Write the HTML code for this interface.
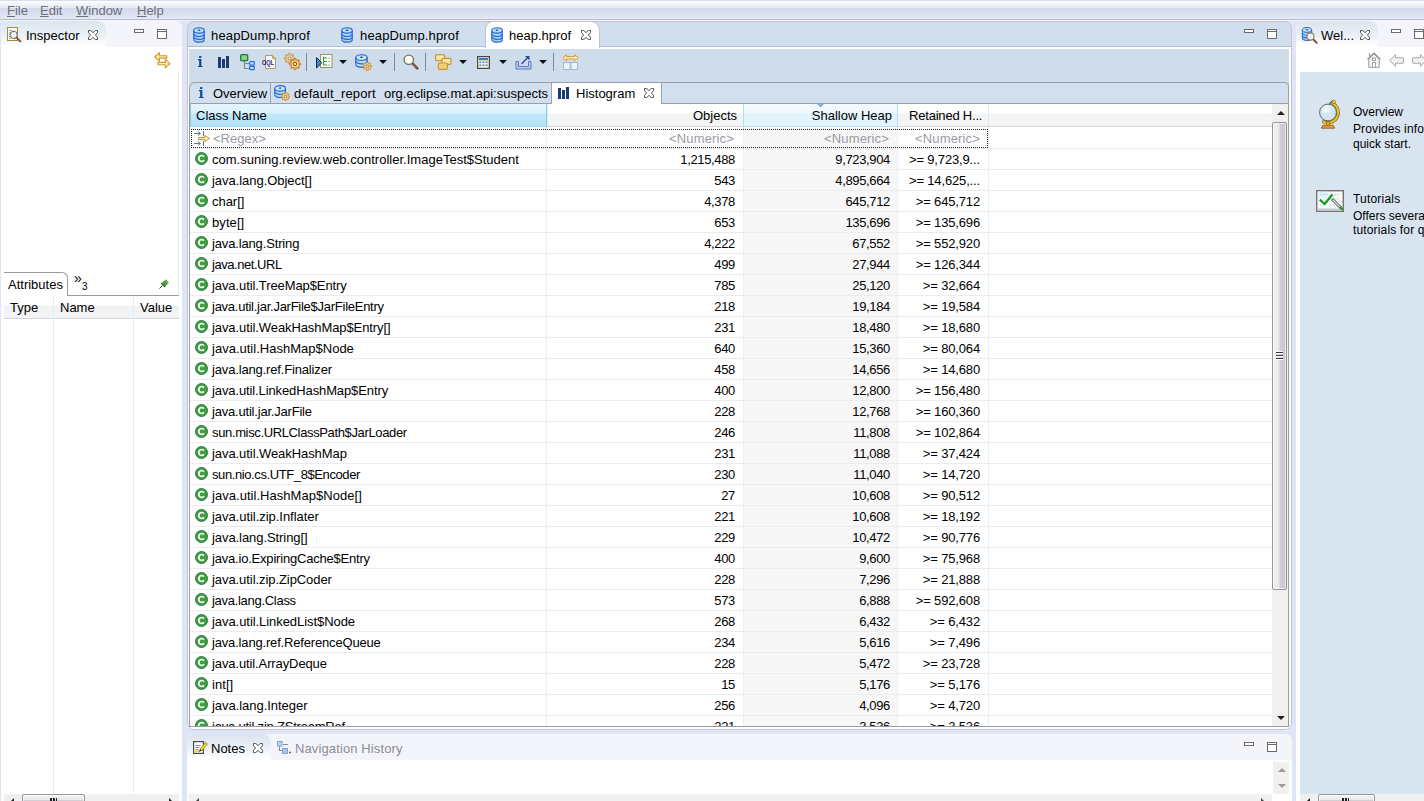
<!DOCTYPE html>
<html><head><meta charset="utf-8"><title>Eclipse Memory Analyzer</title>
<style>
*{box-sizing:border-box;margin:0;padding:0}
html,body{width:1424px;height:801px;overflow:hidden}
body{background:#dfe5f6;font-family:"Liberation Sans",sans-serif;font-size:13px;color:#000;position:relative}
div,span,i,svg,b{position:absolute}
svg{overflow:visible}
/* menu */
#menu{left:0;top:0;width:1424px;height:21px;background:linear-gradient(#d5e1f0 0,#d5e1f0 1px,#fff 1px,#fdfdfe 2px,#f1f3fa 4px,#e7ebf6 8px,#d4d9ec 8px,#d8ddef 12px,#e4e8f7 19px,#b8bdd0 19px,#b8bdd0 20px,#f3f3f5 20px)}
#menu span{top:3px;color:#6f6f78;font-size:13px;line-height:16px;white-space:nowrap}
#menu u{text-decoration:underline;text-underline-offset:1px}
/* panels */
.panel{background:#fff;border-radius:7px 7px 0 0}
.tabbar{left:0;top:0;right:0;height:25px;border-radius:7px 7px 0 0}
.t{white-space:nowrap;line-height:16px;font-size:13px}
.atab{left:0;top:0;height:25px;border-radius:7px 9px 0 0;background:linear-gradient(#dbe5ef,#e9eff5 50%,#fff)}
.min{width:10px;height:4px;border:1px solid #6b6b6b;background:#fff}
.max{width:10px;height:10px;border:1px solid #6b6b6b;background:linear-gradient(#fff 0,#fff 1px,#6b6b6b 1px,#6b6b6b 2px,#fff 2px)}
.sep{top:32px;width:1px;height:18px;background:#7e8a9c}
.dd{top:39px;width:0;height:0;border-left:4px solid transparent;border-right:4px solid transparent;border-top:4px solid #111}
/* table */
#tbl{left:190px;top:104px;width:1082px;height:622px;background:#fff;overflow:hidden}
.row{left:0;width:1082px;height:21px;border-bottom:1px solid #ececec}
.row span{top:3px;line-height:16px;white-space:nowrap}
.cn{left:22px}
.c2{right:537px;letter-spacing:-.35px}
.c3{right:382px;letter-spacing:-.35px}
.c4{right:292px;letter-spacing:-.15px}
.ci{left:5px;top:3px}
.colsep{top:23px;width:1px;bottom:0;background:#e9eff8}
.sb{background:#f0f0f0}
.thumb{border:1px solid #979797;border-radius:2px;box-shadow:inset 0 0 0 1px rgba(255,255,255,.6);background:linear-gradient(90deg,#f5f5f5,#e9e9eb 45%,#cfcfd4 55%,#c6c6cb)}
.thumbh{border:1px solid #979797;border-radius:2px;box-shadow:inset 0 0 0 1px rgba(255,255,255,.6);background:linear-gradient(#f5f5f5,#e9e9eb 45%,#cfcfd4 55%,#c6c6cb)}
</style></head><body>

<div id="menu">
<span style="left:7px"><u>F</u>ile</span>
<span style="left:40px"><u>E</u>dit</span>
<span style="left:76px"><u>W</u>indow</span>
<span style="left:137px"><u>H</u>elp</span>
</div>

<div class="panel" id="insp" style="left:1px;top:21px;width:181px;height:780px">
  <div class="tabbar" style="background:#f4f5fb;height:26px"></div>
  <div class="atab" style="width:105px;height:26px"></div>
  <!-- inspector icon -->
  <svg style="left:6px;top:6px" width="15" height="16" viewBox="0 0 15 16">
    <rect x=".5" y=".5" width="10" height="13" fill="#fdfdfb" stroke="#a88c3e"/>
    <path d="M2 3.5h3.5M2 5.5h1M2 7.5h1M2 9.5h1M2 11.5h1.5" stroke="#8aa0dc" stroke-width="1"/>
    <circle cx="6.8" cy="7.9" r="3.5" fill="#f1f3f5" fill-opacity=".92" stroke="#a89a4a" stroke-width="1.1"/>
    <circle cx="6.8" cy="7.9" r="3.5" fill="none" stroke="#4f6aa8" stroke-width="1.1" stroke-dasharray="1.6 2.2"/>
    <path d="M9.6 10.6L13.4 14.4" stroke="#8a4a3a" stroke-width="1.9" stroke-linecap="round"/>
  </svg>
  <span class="t" style="left:25px;top:7px">Inspector</span>
  <svg style="left:87px;top:9px" width="10" height="10"><use href="#xx" width="10" height="10"/></svg>
  <div class="min" style="left:133px;top:8px"></div>
  <div class="max" style="left:156px;top:8px"></div>
  <!-- link arrows icon -->
  <svg style="left:153px;top:31px" width="17" height="17" viewBox="0 0 17 17">
    <path d="M.7 5L5.4 .7V3.7H12.8V6.1H5.4V9.2Z" fill="#ffefb0" stroke="#cf982a" stroke-width="1.1" stroke-linejoin="round"/>
    <path d="M16 11.7L11.3 7.4V10.4H4V12.8H11.3V15.9Z" fill="#ffefb0" stroke="#cf982a" stroke-width="1.1" stroke-linejoin="round"/>
  </svg>
  <div style="left:177px;top:50px;width:1px;height:223px;background:#e3e9f3"></div>
  <!-- attributes tab folder -->
  <div style="left:3px;top:274px;width:175px;height:1px;background:#9b9b9b"></div>
  <div style="left:3px;top:251px;width:64px;height:24px;border:1px solid #9b9b9b;border-left:0;border-bottom:0;border-radius:0 6px 0 0;background:#fff"></div>
  <span class="t" style="left:7px;top:256px">Attributes</span>
  <span class="t" style="left:73px;top:249px;font-size:14px;letter-spacing:-1px">»</span>
  <span class="t" style="left:81px;top:260px;font-size:10px;line-height:12px">3</span>
  <svg style="left:158px;top:258px" width="10" height="10" viewBox="0 0 10 10">
    <path d="M0.5 9.5L3.5 6.5" stroke="#333" stroke-width="1"/>
    <path d="M3 4.5L6 1.5 8.8 4.3 5.8 7.3Z" fill="#4aa33a" stroke="#2f7a2a" stroke-width=".8"/>
    <path d="M2.2 4L6.2 8" stroke="#2f7a2a" stroke-width="1.4"/>
    <path d="M6.3 .8L9.4 3.9" stroke="#6cc25a" stroke-width="1.6"/>
  </svg>
  <!-- attr table header -->
  <div style="left:3px;top:275px;width:175px;height:23px;background:linear-gradient(#fff,#fff 9px,#f1f2f4 10px,#f3f4f6);border-bottom:1px solid #d6d6d6"></div>
  <span class="t" style="left:9px;top:279px">Type</span>
  <span class="t" style="left:59px;top:279px">Name</span>
  <span class="t" style="left:139px;top:279px">Value</span>
  <div style="left:52px;top:275px;width:1px;height:498px;background:#e6ecf8"></div>
  <div style="left:132px;top:275px;width:1px;height:498px;background:#e6ecf8"></div>
  <!-- hscroll -->
  <div class="sb" style="left:3px;top:773px;width:175px;height:7px"></div>
  <div class="thumbh" style="left:21px;top:773px;width:63px;height:12px"></div>
  <svg style="left:8px;top:777px" width="5" height="9" viewBox="0 0 5 9"><path d="M5 0L.5 4.5 5 9Z" fill="#222"/></svg>
  <svg style="left:168px;top:777px" width="5" height="9" viewBox="0 0 5 9"><path d="M0 0L4.5 4.5 0 9Z" fill="#222"/></svg>
  <div style="left:49px;top:777px;width:2px;height:3px;background:#222"></div>
  <div style="left:52px;top:777px;width:2px;height:3px;background:#222"></div>
  <div style="left:55px;top:777px;width:1px;height:3px;background:#222"></div>
</div>

<svg width="0" height="0" style="left:0;top:0">
  <defs>
    <symbol id="db" viewBox="0 0 13 17">
      <path d="M.8 3.6V13.4A5.7 2.9 0 0 0 12.2 13.4V3.6Z" fill="#a9d6ee"/>
      <path d="M.8 7.2A5.7 2.9 0 0 0 12.2 7.2M.8 10.3A5.7 2.9 0 0 0 12.2 10.3M.8 13.4A5.7 2.9 0 0 0 12.2 13.4" fill="none" stroke="#2563dc" stroke-width="1.3"/>
      <path d="M.8 3.6V13.4M12.2 3.6V13.4" stroke="#2563dc" stroke-width="1.15"/>
      <ellipse cx="6.5" cy="3.6" rx="5.7" ry="2.9" fill="#b5dcf0" stroke="#2563dc" stroke-width="1.15"/>
      <ellipse cx="6.5" cy="3.3" rx="1.4" ry=".7" fill="#1b3a6e"/>
    </symbol>
    <symbol id="gear" viewBox="-5 -5 10 10">
      <path d="M3.21 -0.77L4.55 -0.65L4.55 0.65L3.21 0.77L2.81 1.72L3.68 2.76L2.76 3.68L1.72 2.81L0.77 3.21L0.65 4.55L-0.65 4.55L-0.77 3.21L-1.72 2.81L-2.76 3.68L-3.68 2.76L-2.81 1.72L-3.21 0.77L-4.55 0.65L-4.55 -0.65L-3.21 -0.77L-2.81 -1.72L-3.68 -2.76L-2.76 -3.68L-1.72 -2.81L-0.77 -3.21L-0.65 -4.55L0.65 -4.55L0.77 -3.21L1.72 -2.81L2.76 -3.68L3.68 -2.76L2.81 -1.72Z" fill="#fbd888" stroke="#cf842a" stroke-width=".95" stroke-linejoin="round"/>
      <circle r="1.35" fill="#fff" stroke="#8f4f1c" stroke-width=".85"/>
    </symbol>
    <symbol id="db3" viewBox="0 0 13 14">
      <path d="M.8 3.6V10.4A5.7 2.9 0 0 0 12.2 10.4V3.6Z" fill="#b4def2"/>
      <path d="M.8 7A5.7 2.9 0 0 0 12.2 7M.8 10.4A5.7 2.9 0 0 0 12.2 10.4" fill="none" stroke="#2563dc" stroke-width="1.25"/>
      <path d="M.8 3.6V10.4M12.2 3.6V10.4" stroke="#2563dc" stroke-width="1.15"/>
      <ellipse cx="6.5" cy="3.6" rx="5.7" ry="2.9" fill="#bfe3f4" stroke="#2563dc" stroke-width="1.15"/>
      <ellipse cx="6.5" cy="3.3" rx="1.4" ry=".7" fill="#1b3a6e"/>
    </symbol>
    <symbol id="dbg" viewBox="0 0 17 17">
      <use href="#db3" x="0" y="0" width="13" height="14"/>
      <use href="#gear" x="7.5" y="7.5" width="9.5" height="9.5"/>
    </symbol>
    <symbol id="bars" viewBox="0 0 11 12">
      <rect x="0" y="1" width="3" height="11" fill="#1c3c70"/>
      <rect x="4" y="3" width="3" height="9" fill="#1c3c70"/>
      <rect x="8" y="0" width="3" height="12" fill="#1c3c70"/>
    </symbol>
    <symbol id="xx" viewBox="0 0 10 10"><path d="M.5 .5H2.7L5 2.6 7.3 .5H9.5V2.7L7.4 5 9.5 7.3V9.5H7.3L5 7.4 2.7 9.5H.5V7.3L2.6 5 .5 2.7Z" fill="#fff" stroke="#545454" stroke-width="1" stroke-linejoin="round"/></symbol>
    <symbol id="ii" viewBox="0 0 5 12"><rect x="1" y="0" width="2.4" height="2.1" rx=".5" fill="#0b52a3"/><path d="M0 3.1H3.3V10H4.6V11.1H0V10H1.2V4.2H0Z" fill="#07459a"/></symbol>
    <symbol id="cc" viewBox="0 0 13 13"><circle cx="6.5" cy="6.5" r="6" fill="#3f9f40" stroke="#2a7b45" stroke-width="1"/><path d="M8.9 4.6A2.9 3 0 1 0 8.9 8.4" fill="none" stroke="#fff" stroke-width="1.7"/></symbol>
  </defs>
</svg>
<div class="panel" id="ed" style="left:187px;top:21px;width:1105px;height:709px;border-radius:7px 7px 7px 7px">
  <div class="tabbar" style="background:#d0deee;height:26px;border-bottom:1px solid #b0bcd0"></div>
  <div style="left:298px;top:0;width:115px;height:27px;background:#fff;border-radius:8px 9px 0 0;border:1px solid #bcc5d8;border-bottom:0"></div>
  <svg style="left:6px;top:6px" width="12" height="16"><use href="#db" width="12" height="16"/></svg>
  <span class="t" style="left:24px;top:7px;letter-spacing:.15px">heapDump.hprof</span>
  <svg style="left:154px;top:6px" width="12" height="16"><use href="#db" width="12" height="16"/></svg>
  <span class="t" style="left:173px;top:7px;letter-spacing:.15px">heapDump.hprof</span>
  <svg style="left:304px;top:6px" width="12" height="16"><use href="#db" width="12" height="16"/></svg>
  <span class="t" style="left:322px;top:7px">heap.hprof</span>
  <svg style="left:394px;top:9px" width="10" height="10"><use href="#xx" width="10" height="10"/></svg>
  <div class="min" style="left:1057px;top:8px"></div>
  <div class="max" style="left:1080px;top:8px"></div>
  <!-- blue inner -->
  <div id="inner" style="left:2px;top:28px;width:1100px;height:678px;background:#cfdcec">
    <!-- toolbar: coords relative to (189,49) -->
    <svg style="left:8.7px;top:7px" width="5" height="12"><use href="#ii" width="5" height="12"/></svg>
    <svg style="left:29px;top:7px" width="11" height="12"><use href="#bars" width="11" height="12"/></svg>
    <svg style="left:51px;top:5px" width="15" height="16" viewBox="0 0 15 16">
      <path d="M4.5 7V14.5H10M4.5 9.5H10" fill="none" stroke="#7d8796" stroke-width="1.2"/>
      <rect x=".7" y=".7" width="7" height="6" rx="1" fill="#8fcf86" stroke="#1f7a3a" stroke-width="1.3"/>
      <rect x="9.7" y="7.7" width="4.6" height="3.4" rx=".6" fill="#bfe3fa" stroke="#2f6fd8" stroke-width="1.2"/>
      <rect x="9.7" y="12.3" width="4.6" height="3.4" rx=".6" fill="#bfe3fa" stroke="#2f6fd8" stroke-width="1.2"/>
    </svg>
    <svg style="left:73px;top:6px" width="15" height="14" viewBox="0 0 15 14">
      <path d="M3.5 .5H10.5L13.5 3.5V13.5H3.5Z" fill="#f4f6fb" stroke="#b49a5c" stroke-width="1"/>
      <path d="M10.5 .5V3.5H13.5Z" fill="#e8c878" stroke="#b49a5c" stroke-width=".8"/>
      <text x="0" y="10.3" font-family="Liberation Sans" font-weight="bold" font-size="6.6" fill="#1c1c7a" textLength="12" lengthAdjust="spacingAndGlyphs">OQL</text>
    </svg>
    <svg style="left:95px;top:4px" width="17" height="17" viewBox="0 0 17 17">
      <use href="#gear" x="0" y="0" width="11" height="11" opacity=".75"/>
      <use href="#gear" x="5" y="5" width="12" height="12"/>
    </svg>
    <div class="sep" style="left:117px;top:4px"></div>
    <svg style="left:127px;top:5px" width="17" height="15" viewBox="0 0 17 15">
      <rect x="4.5" y=".5" width="11.5" height="13" fill="#fdfdf8" stroke="#a8905a" stroke-width="1"/>
      <path d="M7.5 2.5V11.5M7.5 4H11M7.5 7.5H11M7.5 11H11" fill="none" stroke="#2e9a4a" stroke-width="1.1"/>
      <path d="M12.5 4h1.2M12.5 7.5h1.2M12.5 11h1.2" stroke="#2e9a4a" stroke-width="1.2"/>
      <path d="M.5 3.5L5.8 8.8.5 14Z" fill="#3f8fb5" stroke="#12226e" stroke-width="1" stroke-linejoin="round"/>
    </svg>
    <div class="dd" style="left:150px;top:11px"></div>
    <svg style="left:166px;top:5px" width="17" height="17"><use href="#dbg" width="17" height="17"/></svg>
    <div class="dd" style="left:190px;top:11px"></div>
    <div class="sep" style="left:205px;top:4px"></div>
    <svg style="left:214px;top:5px" width="16" height="16" viewBox="0 0 16 16">
      <path d="M9.2 9.2L14.3 14.3" stroke="#5a3a2a" stroke-width="2.4" stroke-linecap="round"/>
      <path d="M9.8 9.8L13.8 13.8" stroke="#c8785a" stroke-width="1" stroke-linecap="round"/>
      <circle cx="5.8" cy="5.8" r="4.7" fill="#fbfbee" stroke="#757575" stroke-width="1.4"/>
    </svg>
    <div class="sep" style="left:236px;top:4px"></div>
    <svg style="left:246px;top:5px" width="17" height="16" viewBox="0 0 17 16">
      <rect x=".6" y=".6" width="9" height="6" rx="1.3" fill="#fbe7a2" stroke="#c9962f" stroke-width="1.2"/>
      <rect x="7" y="4.4" width="9" height="6" rx="1.3" fill="#fbe7a2" stroke="#c9962f" stroke-width="1.2"/>
      <rect x="3.4" y="9" width="9" height="6.4" rx="1.3" fill="#f4d070" stroke="#c9962f" stroke-width="1.2"/>
    </svg>
    <div class="dd" style="left:270px;top:11px"></div>
    <svg style="left:288px;top:7px" width="13" height="13" viewBox="0 0 13 13">
      <rect x=".6" y=".6" width="11.8" height="11.8" fill="#f3edd0" stroke="#474747" stroke-width="1.2"/>
      <rect x="2" y="2" width="9" height="2.2" fill="#3a7fb0"/>
      <path d="M2.5 6.3h1.7M5.6 6.3h1.7M8.7 6.3h1.7M2.5 9.3h1.7M5.6 9.3h1.7M8.7 9.3h1.7" stroke="#3f86c8" stroke-width="1.6"/>
    </svg>
    <div class="dd" style="left:310px;top:11px"></div>
    <svg style="left:326px;top:6px" width="17" height="15" viewBox="0 0 17 15">
      <path d="M1 6.5V14H16V6.5H13.5V11.5H3.5V6.5Z" fill="#b9c9e6" stroke="#5a7cc0" stroke-width="1"/>
      <path d="M6.5 9L13.5 1.8" stroke="#274a9a" stroke-width="1.3"/>
      <path d="M10 1H14.5V5.5Z" fill="#274a9a"/>
    </svg>
    <div class="dd" style="left:350px;top:11px"></div>
    <div class="sep" style="left:364px;top:4px"></div>
    <svg style="left:373px;top:5px" width="17" height="16" viewBox="0 0 17 16">
      <path d="M.8 3.8L4.3 .8V2.6H12.7V.8L16.2 3.8 12.7 6.8V5H4.3V6.8Z" fill="#fff3c0" stroke="#d49a2a" stroke-width="1" stroke-linejoin="round"/>
      <rect x="1.5" y="8.5" width="6.5" height="7" fill="#e6f6fb" stroke="#a9b4c8" stroke-width="1"/>
      <rect x="9" y="8.5" width="6.5" height="7" fill="#e6f6fb" stroke="#a9b4c8" stroke-width="1"/>
    </svg>
    <!-- inner tab bar: abs y 82..103 => rel 33..54 ; abs x 189 => rel 0 -->
    <div style="left:0;top:33px;width:1100px;height:22px;border:1px solid #9a9ea6;border-radius:6px 4px 0 0;background:#d2dfee"></div>
    <div style="left:81px;top:34px;width:1px;height:20px;background:#9aa3b0"></div>
    <div style="left:362px;top:34px;width:111px;height:22px;background:#fff;border-left:1px solid #9aa3b0;border-right:1px solid #9aa3b0"></div>
    <svg style="left:10px;top:38px" width="5" height="12"><use href="#ii" width="5" height="12"/></svg>
    <span class="t" style="left:24px;top:37px">Overview</span>
    <svg style="left:85px;top:36px" width="16" height="16"><use href="#dbg" width="16" height="16"/></svg>
    <span class="t" style="left:105px;top:37px;letter-spacing:.1px">default_report</span>
    <span class="t" style="left:195px;top:37px">org.eclipse.mat.api:suspects</span>
    <svg style="left:369px;top:38px" width="11" height="12"><use href="#bars" width="11" height="12"/></svg>
    <span class="t" style="left:387px;top:37px">Histogram</span>
    <svg style="left:455px;top:39px" width="10" height="10"><use href="#xx" width="10" height="10"/></svg>
    <!-- table border frame abs 189..1289 x 104..727 -->
    <div style="left:0;top:55px;width:1100px;height:623px;border:1px solid #979a9f;border-top:0;background:#fff"></div>
  </div>
  <div style="left:0;top:0;width:1105px;height:709px;border:1px solid #c4c4ca;border-radius:7px"></div>
</div>

<div id="tbl">
  <div id="hdr" style="left:0;top:0;width:1082px;height:23px;background:linear-gradient(#fff,#fff 9px,#f2f3f5 10px,#f4f5f7);border-bottom:1px solid #d6d6d6"></div>
  <div style="left:0;top:0;width:357px;height:23px;background:linear-gradient(#e4f6fe,#dcf2fc 9px,#bfe8fb 10px,#b4e2f9);border:1px solid #84cbee;border-top:0;border-bottom-color:#9fd6f0"></div>
  <div style="left:553px;top:0;width:155px;height:23px;background:linear-gradient(#f4fbfe,#eef8fd 9px,#e1f3fc 10px,#e4f4fc);border:1px solid #b5ddf2;border-top:0"></div>
  <svg style="left:626.5px;top:0" width="7" height="4" viewBox="0 0 7 4"><path d="M0 0H7L3.5 3.7Z" fill="#8ab4d6"/></svg>
  <span class="t" style="left:6px;top:4px">Class Name</span>
  <span class="t" style="right:535px;top:4px">Objects</span>
  <span class="t" style="right:380px;top:4px">Shallow Heap</span>
  <span class="t" style="left:719px;top:4px;letter-spacing:-.2px">Retained H...</span>
  <div style="left:357px;top:1px;width:1px;height:21px;background:#e3e8ee"></div>
  <div style="left:798px;top:1px;width:1px;height:21px;background:#dfe6ee"></div>
  <div style="left:553px;top:24px;width:154px;bottom:0;background:#f7f7f7"></div>
  <div class="colsep" style="left:356px"></div>
  <div class="colsep" style="left:553px"></div>
  <div class="colsep" style="left:707px"></div>
  <div class="colsep" style="left:798px"></div>
  <div style="left:0;top:44px;width:1082px;height:1px;background:#ececec"></div>
  <!-- filter row -->
  <div style="left:1px;top:25px;width:797px;height:19px;border:1px dotted #222"></div>
  <svg style="left:4px;top:27px" width="17" height="16" viewBox="0 0 17 16">
    <path d="M0 2.5H6M4 .5L6.5 2.5 4 4.5M9.5 0V5M0 12.5H6M4 10.5L6.5 12.5 4 14.5M9.5 10V15" fill="none" stroke="#5a7896" stroke-width="1"/>
    <path d="M4.5 6.5H11V4.5L15.5 7.5 11 10.5V8.5H4.5Z" fill="#fff6d0" stroke="#c8922a" stroke-width="1" stroke-linejoin="round"/>
  </svg>
  <span class="t" style="left:23px;top:27px;color:#9a9aa2">&lt;Regex&gt;</span>
  <span class="t" style="right:538px;top:27px;letter-spacing:.15px;color:#9a9aa2">&lt;Numeric&gt;</span>
  <span class="t" style="right:383px;top:27px;letter-spacing:.15px;color:#9a9aa2">&lt;Numeric&gt;</span>
  <span class="t" style="right:292px;top:27px;letter-spacing:.15px;color:#9a9aa2">&lt;Numeric&gt;</span>
<div class="row" style="top:45px"><svg class="ci" width="13" height="13"><use href="#cc" width="13" height="13"/></svg><span class="cn" style="letter-spacing:0.01px">com.suning.review.web.controller.ImageTest$Student</span><span class="c2">1,215,488</span><span class="c3">9,723,904</span><span class="c4">&gt;= 9,723,9...</span></div>
<div class="row" style="top:66px"><svg class="ci" width="13" height="13"><use href="#cc" width="13" height="13"/></svg><span class="cn" style="letter-spacing:-0.04px">java.lang.Object[]</span><span class="c2">543</span><span class="c3">4,895,664</span><span class="c4">&gt;= 14,625,...</span></div>
<div class="row" style="top:87px"><svg class="ci" width="13" height="13"><use href="#cc" width="13" height="13"/></svg><span class="cn" style="letter-spacing:-0.04px">char[]</span><span class="c2">4,378</span><span class="c3">645,712</span><span class="c4">&gt;= 645,712</span></div>
<div class="row" style="top:108px"><svg class="ci" width="13" height="13"><use href="#cc" width="13" height="13"/></svg><span class="cn" style="letter-spacing:0.08px">byte[]</span><span class="c2">653</span><span class="c3">135,696</span><span class="c4">&gt;= 135,696</span></div>
<div class="row" style="top:129px"><svg class="ci" width="13" height="13"><use href="#cc" width="13" height="13"/></svg><span class="cn" style="letter-spacing:-0.15px">java.lang.String</span><span class="c2">4,222</span><span class="c3">67,552</span><span class="c4">&gt;= 552,920</span></div>
<div class="row" style="top:150px"><svg class="ci" width="13" height="13"><use href="#cc" width="13" height="13"/></svg><span class="cn" style="letter-spacing:-0.45px">java.net.URL</span><span class="c2">499</span><span class="c3">27,944</span><span class="c4">&gt;= 126,344</span></div>
<div class="row" style="top:171px"><svg class="ci" width="13" height="13"><use href="#cc" width="13" height="13"/></svg><span class="cn" style="letter-spacing:-0.09px">java.util.TreeMap$Entry</span><span class="c2">785</span><span class="c3">25,120</span><span class="c4">&gt;= 32,664</span></div>
<div class="row" style="top:192px"><svg class="ci" width="13" height="13"><use href="#cc" width="13" height="13"/></svg><span class="cn" style="letter-spacing:-0.26px">java.util.jar.JarFile$JarFileEntry</span><span class="c2">218</span><span class="c3">19,184</span><span class="c4">&gt;= 19,584</span></div>
<div class="row" style="top:213px"><svg class="ci" width="13" height="13"><use href="#cc" width="13" height="13"/></svg><span class="cn" style="letter-spacing:-0.09px">java.util.WeakHashMap$Entry[]</span><span class="c2">231</span><span class="c3">18,480</span><span class="c4">&gt;= 18,680</span></div>
<div class="row" style="top:234px"><svg class="ci" width="13" height="13"><use href="#cc" width="13" height="13"/></svg><span class="cn" style="letter-spacing:0.01px">java.util.HashMap$Node</span><span class="c2">640</span><span class="c3">15,360</span><span class="c4">&gt;= 80,064</span></div>
<div class="row" style="top:255px"><svg class="ci" width="13" height="13"><use href="#cc" width="13" height="13"/></svg><span class="cn" style="letter-spacing:-0.16px">java.lang.ref.Finalizer</span><span class="c2">458</span><span class="c3">14,656</span><span class="c4">&gt;= 14,680</span></div>
<div class="row" style="top:276px"><svg class="ci" width="13" height="13"><use href="#cc" width="13" height="13"/></svg><span class="cn" style="letter-spacing:-0.11px">java.util.LinkedHashMap$Entry</span><span class="c2">400</span><span class="c3">12,800</span><span class="c4">&gt;= 156,480</span></div>
<div class="row" style="top:297px"><svg class="ci" width="13" height="13"><use href="#cc" width="13" height="13"/></svg><span class="cn" style="letter-spacing:-0.20px">java.util.jar.JarFile</span><span class="c2">228</span><span class="c3">12,768</span><span class="c4">&gt;= 160,360</span></div>
<div class="row" style="top:318px"><svg class="ci" width="13" height="13"><use href="#cc" width="13" height="13"/></svg><span class="cn" style="letter-spacing:-0.36px">sun.misc.URLClassPath$JarLoader</span><span class="c2">246</span><span class="c3">11,808</span><span class="c4">&gt;= 102,864</span></div>
<div class="row" style="top:339px"><svg class="ci" width="13" height="13"><use href="#cc" width="13" height="13"/></svg><span class="cn" style="letter-spacing:-0.07px">java.util.WeakHashMap</span><span class="c2">231</span><span class="c3">11,088</span><span class="c4">&gt;= 37,424</span></div>
<div class="row" style="top:360px"><svg class="ci" width="13" height="13"><use href="#cc" width="13" height="13"/></svg><span class="cn" style="letter-spacing:-0.40px">sun.nio.cs.UTF_8$Encoder</span><span class="c2">230</span><span class="c3">11,040</span><span class="c4">&gt;= 14,720</span></div>
<div class="row" style="top:381px"><svg class="ci" width="13" height="13"><use href="#cc" width="13" height="13"/></svg><span class="cn" style="letter-spacing:0.04px">java.util.HashMap$Node[]</span><span class="c2">27</span><span class="c3">10,608</span><span class="c4">&gt;= 90,512</span></div>
<div class="row" style="top:402px"><svg class="ci" width="13" height="13"><use href="#cc" width="13" height="13"/></svg><span class="cn" style="letter-spacing:-0.04px">java.util.zip.Inflater</span><span class="c2">221</span><span class="c3">10,608</span><span class="c4">&gt;= 18,192</span></div>
<div class="row" style="top:423px"><svg class="ci" width="13" height="13"><use href="#cc" width="13" height="13"/></svg><span class="cn" style="letter-spacing:-0.07px">java.lang.String[]</span><span class="c2">229</span><span class="c3">10,472</span><span class="c4">&gt;= 90,776</span></div>
<div class="row" style="top:444px"><svg class="ci" width="13" height="13"><use href="#cc" width="13" height="13"/></svg><span class="cn" style="letter-spacing:-0.20px">java.io.ExpiringCache$Entry</span><span class="c2">400</span><span class="c3">9,600</span><span class="c4">&gt;= 75,968</span></div>
<div class="row" style="top:465px"><svg class="ci" width="13" height="13"><use href="#cc" width="13" height="13"/></svg><span class="cn" style="letter-spacing:-0.07px">java.util.zip.ZipCoder</span><span class="c2">228</span><span class="c3">7,296</span><span class="c4">&gt;= 21,888</span></div>
<div class="row" style="top:486px"><svg class="ci" width="13" height="13"><use href="#cc" width="13" height="13"/></svg><span class="cn" style="letter-spacing:-0.29px">java.lang.Class</span><span class="c2">573</span><span class="c3">6,888</span><span class="c4">&gt;= 592,608</span></div>
<div class="row" style="top:507px"><svg class="ci" width="13" height="13"><use href="#cc" width="13" height="13"/></svg><span class="cn" style="letter-spacing:-0.06px">java.util.LinkedList$Node</span><span class="c2">268</span><span class="c3">6,432</span><span class="c4">&gt;= 6,432</span></div>
<div class="row" style="top:528px"><svg class="ci" width="13" height="13"><use href="#cc" width="13" height="13"/></svg><span class="cn" style="letter-spacing:-0.17px">java.lang.ref.ReferenceQueue</span><span class="c2">234</span><span class="c3">5,616</span><span class="c4">&gt;= 7,496</span></div>
<div class="row" style="top:549px"><svg class="ci" width="13" height="13"><use href="#cc" width="13" height="13"/></svg><span class="cn" style="letter-spacing:-0.11px">java.util.ArrayDeque</span><span class="c2">228</span><span class="c3">5,472</span><span class="c4">&gt;= 23,728</span></div>
<div class="row" style="top:570px"><svg class="ci" width="13" height="13"><use href="#cc" width="13" height="13"/></svg><span class="cn" style="letter-spacing:0.07px">int[]</span><span class="c2">15</span><span class="c3">5,176</span><span class="c4">&gt;= 5,176</span></div>
<div class="row" style="top:591px"><svg class="ci" width="13" height="13"><use href="#cc" width="13" height="13"/></svg><span class="cn" style="letter-spacing:-0.04px">java.lang.Integer</span><span class="c2">256</span><span class="c3">4,096</span><span class="c4">&gt;= 4,720</span></div>
<div class="row" style="top:612px"><svg class="ci" width="13" height="13"><use href="#cc" width="13" height="13"/></svg><span class="cn" style="letter-spacing:-0.21px">java.util.zip.ZStreamRef</span><span class="c2">221</span><span class="c3">3,536</span><span class="c4">&gt;= 3,536</span></div>
</div>
<!-- vertical scrollbar -->
<div class="sb" style="left:1272px;top:104px;width:16px;height:622px"></div>
<div class="thumb" style="left:1272px;top:122px;width:15px;height:468px"></div>
<svg style="left:1276.5px;top:111px" width="8" height="4" viewBox="0 0 8 4"><path d="M0 4L4 0 8 4Z" fill="#222"/></svg>
<svg style="left:1276.5px;top:716px" width="8" height="4" viewBox="0 0 8 4"><path d="M0 0L4 4 8 0Z" fill="#222"/></svg>
<div style="left:1276px;top:352px;width:7px;height:1px;background:#3a3a3a;box-shadow:0 1px 0 #fff,0 3px 0 #3a3a3a,0 4px 0 #fff,0 6px 0 #3a3a3a,0 7px 0 #fff,0 -1px 0 #f4f4f4"></div>

<div class="panel" id="notes" style="left:187px;top:734px;width:1105px;height:67px">
  <div class="tabbar" style="background:#f4f5fb;height:26px"></div>
  <div class="atab" style="width:84px;height:26px"></div>
  <svg style="left:6px;top:7px" width="15" height="13" viewBox="0 0 15 13">
    <rect x=".6" y=".6" width="9.8" height="11.8" fill="#fff" stroke="#4a4a4a" stroke-width="1.2"/>
    <path d="M2.5 4.5h5M2.5 6.5h4M2.5 8.5h3" stroke="#8a8ab8" stroke-width="1"/>
    <rect x="1.5" y="9.5" width="5" height="2" fill="#f0d020"/>
    <path d="M6.5 9.5L5.6 10.6 7.5 9.9Z" fill="#222"/>
    <path d="M7 8.2L12.5 1.2 14.4 2.8 8.9 9.8Z" fill="#f4d820" stroke="#8a6a10" stroke-width=".7"/>
    <path d="M7 8.2L6.2 10.6 8.9 9.8Z" fill="#222"/>
  </svg>
  <span class="t" style="left:24px;top:7px">Notes</span>
  <svg style="left:66px;top:9px" width="10" height="10"><use href="#xx" width="10" height="10"/></svg>
  <svg style="left:90px;top:7px" width="15" height="14" viewBox="0 0 15 14">
    <rect x=".5" y=".5" width="4.5" height="4.5" fill="#b9d3f0" stroke="#7fa6d8" stroke-width="1"/>
    <rect x="5.5" y="7.5" width="5" height="5" fill="#a9c6ea" stroke="#7fa6d8" stroke-width="1"/>
    <path d="M2.5 5.5V9.5H5M6 3.5H11" fill="none" stroke="#8a8a8a" stroke-width="1.1"/>
    <path d="M12 11.5h2" stroke="#666" stroke-width="1.3"/>
  </svg>
  <span class="t" style="left:108px;top:7px;letter-spacing:.12px;color:#8c8c96">Navigation History</span>
  <div class="min" style="left:1057px;top:8px"></div>
  <div class="max" style="left:1080px;top:8px"></div>
  <!-- scrollbars -->
  <div class="sb" style="left:1086px;top:28px;width:16px;height:32px"></div>
  <svg style="left:1090.5px;top:34px" width="8" height="4" viewBox="0 0 8 4"><path d="M0 4L4 0 8 4Z" fill="#9a9a9a"/></svg>
  <svg style="left:1090.5px;top:50px" width="8" height="4" viewBox="0 0 8 4"><path d="M0 0L4 4 8 0Z" fill="#9a9a9a"/></svg>
  <div class="sb" style="left:2px;top:60px;width:1083px;height:7px"></div>
  <svg style="left:7px;top:64px" width="5" height="9" viewBox="0 0 5 9"><path d="M5 0L.5 4.5 5 9Z" fill="#444"/></svg>
  <svg style="left:1074px;top:64px" width="5" height="9" viewBox="0 0 5 9"><path d="M0 0L4.5 4.5 0 9Z" fill="#444"/></svg>
</div>

<div class="panel" id="wel" style="left:1296px;top:21px;width:128px;height:780px;border-radius:7px 0 0 0">
  <div class="tabbar" style="background:#f4f5fb;border-radius:7px 0 0 0;height:26px"></div>
  <div class="atab" style="width:82px;height:26px"></div>
  <svg style="left:5px;top:6px" width="17" height="17" viewBox="0 0 17 17">
    <use href="#db" x="0" y="0" width="12" height="14"/>
    <path d="M12 12L15.8 15.8" stroke="#7a4a2a" stroke-width="1.8" stroke-linecap="round"/>
    <circle cx="9.5" cy="9.5" r="3.6" fill="#e8f2fb" stroke="#8a7a4a" stroke-width="1.1"/>
  </svg>
  <span class="t" style="left:25px;top:7px">Wel...</span>
  <svg style="left:64px;top:9px" width="10" height="10"><use href="#xx" width="10" height="10"/></svg>
  <div class="min" style="left:95px;top:8px"></div>
  <div class="max" style="left:118px;top:8px"></div>
  <!-- home -->
  <svg style="left:71px;top:31px" width="14" height="16" viewBox="0 0 14 16">
    <path d="M2.5 1V5" stroke="#9a9a9a" stroke-width="1.2"/>
    <path d="M.5 7.5L7 1 13.5 7.5" fill="none" stroke="#9a9a9a" stroke-width="1.4"/>
    <path d="M1.8 7V15.3H12.2V7L7 2Z" fill="#f4f4f4" stroke="#9a9a9a" stroke-width="1"/>
    <rect x="5.5" y="6" width="3" height="2.5" fill="#fff" stroke="#9a9a9a" stroke-width=".9"/>
    <rect x="5.6" y="10.5" width="2.8" height="4.8" fill="#fff" stroke="#9a9a9a" stroke-width=".9"/>
  </svg>
  <svg style="left:93px;top:33px" width="15" height="13" viewBox="0 0 15 13"><path d="M.7 6.5L6.5 .8V3.8H14.3V9.2H6.5V12.2Z" fill="#f1f1f1" stroke="#a8a8a8" stroke-width="1" stroke-linejoin="round"/></svg>
  <svg style="left:116px;top:33px" width="15" height="13" viewBox="0 0 15 13"><path d="M14.3 6.5L8.5 .8V3.8H.7V9.2H8.5V12.2Z" fill="#f1f1f1" stroke="#a8a8a8" stroke-width="1" stroke-linejoin="round"/></svg>
  <div style="left:4px;top:51px;right:0;height:722px;background:#d8e5f1"></div>
  <!-- globe -->
  <svg style="left:22px;top:78px" width="24" height="30" viewBox="0 0 24 30">
    <defs><radialGradient id="gl" cx=".38" cy=".3" r=".75"><stop offset="0" stop-color="#fff"/><stop offset=".45" stop-color="#d3e8f6"/><stop offset=".85" stop-color="#cfe3ee"/><stop offset="1" stop-color="#e3ecb8"/></radialGradient></defs>
    <path d="M15.15 4.58A10.3 10.3 0 0 1 5.65 22.83" fill="none" stroke="#8a6a14" stroke-width="3.3" stroke-linecap="round"/>
    <path d="M15.15 4.58A10.3 10.3 0 0 1 5.65 22.83" fill="none" stroke="#f0c52c" stroke-width="1.9" stroke-linecap="round"/>
    <path d="M11.5 4.8L14.6 1.6" stroke="#3a3a2a" stroke-width="1.2"/>
    <circle cx="15.6" cy="2.8" r="1.7" fill="#f3cf4a" stroke="#8a6a14" stroke-width=".8"/>
    <rect x="8.3" y="23" width="3.4" height="3.4" fill="#e9b32a" stroke="#8a6a14" stroke-width=".6"/>
    <path d="M3.4 29.2L4.8 26.3H15.2L16.6 29.2Z" fill="#e9a226" stroke="#8a5e12" stroke-width=".9" stroke-linejoin="round"/>
    <circle cx="10" cy="13.5" r="8.4" fill="url(#gl)" stroke="#55564a" stroke-width=".9"/>
  </svg>
  <svg style="left:20px;top:169px" width="28" height="22" viewBox="0 0 28 22">
    <rect x=".7" y=".7" width="26.6" height="20.6" fill="#f6f9fc" stroke="#7b706a" stroke-width="1.4"/>
    <rect x="1.6" y="1.6" width="10" height="6" fill="#d6f0fa" opacity=".8"/>
    <path d="M2 19.3H26" stroke="#c3ccd4" stroke-width="1.6"/>
    <path d="M4 4.5h8M15 4.5h8M4 15h6M13 15h6M13 9h10" stroke="#c6d4e0" stroke-width="1" stroke-dasharray="2 1"/>
    <path d="M3.8 9.6L8.6 14 16.4 4.6" fill="none" stroke="#159a1c" stroke-width="2.3" stroke-linejoin="round"/>
    <path d="M16 9L25 18" stroke="#5a5a5a" stroke-width="3"/>
    <path d="M16.6 9.6L24.4 17.4" stroke="#f2f2f2" stroke-width="1.3"/>
    <path d="M23.8 16.8L26.6 19.6" stroke="#1f9a2a" stroke-width="2.4"/>
  </svg>
  <span class="t" style="left:57px;top:83px;font-size:12px">Overview</span>
  <span class="t" style="left:57px;top:100px;font-size:12px;letter-spacing:.12px">Provides information</span>
  <span class="t" style="left:57px;top:115px;font-size:12px">quick start.</span>
  <span class="t" style="left:57px;top:170px;font-size:12px;letter-spacing:.2px">Tutorials</span>
  <span class="t" style="left:57px;top:187px;font-size:12px">Offers several</span>
  <span class="t" style="left:57px;top:201px;font-size:12px;letter-spacing:.15px">tutorials for quick</span>
  <!-- hscroll -->
  <div class="sb" style="left:4px;top:773px;right:0;height:7px"></div>
  <svg style="left:9px;top:777px" width="5" height="9" viewBox="0 0 5 9"><path d="M5 0L.5 4.5 5 9Z" fill="#222"/></svg>
  <div class="thumbh" style="left:22px;top:773px;width:57px;height:12px"></div>
  <div style="left:46px;top:777px;width:2px;height:3px;background:#222"></div>
  <div style="left:49px;top:777px;width:2px;height:3px;background:#222"></div>
  <div style="left:52px;top:777px;width:1px;height:3px;background:#222"></div>
</div>

</body></html>
